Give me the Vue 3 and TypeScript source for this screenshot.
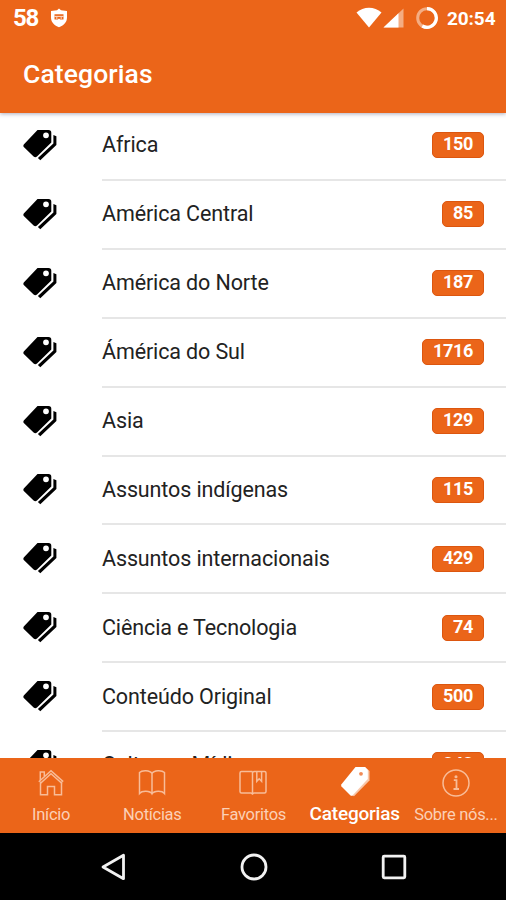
<script setup lang="ts">
interface Category {
  name: string
  count: number
}

interface Tab {
  id: string
  label: string
  active?: boolean
}

const categories: Category[] = [
  { name: 'Africa', count: 150 },
  { name: 'América Central', count: 85 },
  { name: 'América do Norte', count: 187 },
  { name: 'Ámérica do Sul', count: 1716 },
  { name: 'Asia', count: 129 },
  { name: 'Assuntos indígenas', count: 115 },
  { name: 'Assuntos internacionais', count: 429 },
  { name: 'Ciência e Tecnologia', count: 74 },
  { name: 'Conteúdo Original', count: 500 },
  { name: 'Cultura e Mídia', count: 343 },
]

const tabs: Tab[] = [
  { id: 'home', label: 'Início' },
  { id: 'news', label: 'Notícias' },
  { id: 'favorites', label: 'Favoritos' },
  { id: 'categories', label: 'Categorias', active: true },
  { id: 'about', label: 'Sobre nós...' },
]
</script>

<template>
  <div class="screen">
    <header class="header">
      <div class="status">
        <span class="battery">58</span>
        <svg class="shield" viewBox="0 0 18 20" width="18" height="20">
          <path d="M9 0.5 L11 2.2 L17 3 V9.5 C17 14.5 13.5 17.5 9 19.3 C4.5 17.5 1 14.5 1 9.5 V3 L7 2.2 Z" fill="#fff" />
          <path d="M4.5 6.2 H13.5 V11.5 H10.2 L9 10.5 L7.8 11.5 H4.5 Z" fill="#eb6519" />
          <path d="M4.5 8.4 H13.5" stroke="#fff" stroke-width="0.8" />
          <path d="M6 10 H7.5 M10.5 10 H12" stroke="#fff" stroke-width="1" />
        </svg>
        <span class="spacer"></span>
        <svg class="wifi" viewBox="0 0 26 21" width="26" height="21">
          <path d="M0.5 5.6 C7.5 -0.9 18.5 -0.9 25.5 5.6 L13 20.5 Z" fill="#fff" />
        </svg>
        <svg class="signal" viewBox="0 0 21 20" width="21" height="20">
          <path d="M0.5 19.5 L20.5 0.5 V19.5 Z" fill="#f4ad83" />
          <path d="M0.5 19.5 L15.5 5.2 V19.5 Z" fill="#fff" />
        </svg>
        <svg class="ring" viewBox="0 0 24 24" width="24" height="24">
          <circle cx="12" cy="12" r="9.3" fill="none" stroke="#f4ad83" stroke-width="3" />
          <path d="M12 2.7 A9.3 9.3 0 1 1 7.3 20" fill="none" stroke="#fff" stroke-width="3.2" />
        </svg>
        <span class="clock">20:54</span>
      </div>
      <h1 class="title">Categorias</h1>
    </header>

    <main class="list">
      <div v-for="category in categories" :key="category.name" class="row">
        <svg class="tags" viewBox="0 0 34 32" width="34" height="32">
          <path
            fill-rule="evenodd"
            d="M14.5 1 H25.5 Q28.3 1 28.3 3.8 V13.5 L14 27.6 Q12.3 29 10.6 27.6 L0.8 18 Q-0.2 16.6 1 15.2 Z M23 3.4 A2.9 2.9 0 1 0 23 9.2 A2.9 2.9 0 1 0 23 3.4 Z"
            fill="#000"
          />
          <path d="M30.4 6 L33.4 7.2 V16 L17.3 31.2 L14.9 29.1 L30.4 14.4 Z" fill="#000" />
        </svg>
        <div class="body">
          <span class="name">{{ category.name }}</span>
          <span class="badge">{{ category.count }}</span>
        </div>
      </div>
    </main>

    <nav class="tabs">
      <div v-for="tab in tabs" :key="tab.id" class="tab" :class="{ active: tab.active }">
        <svg class="icon" viewBox="0 0 30 30" width="30" height="30">
          <g v-if="tab.id === 'home'" class="line">
            <path d="M4.5 13.5 V26.8 H11.5 V18.5 H18.5 V26.8 H25.5 V13.5" />
            <path d="M2.8 13.8 L15 2.8 L27.2 13.6 M4.3 15.5 L15 5.8 L26 15.5" />
            <path d="M4.3 12 V4 H8.3 V8.3" />
          </g>
          <g v-else-if="tab.id === 'news'" class="line">
            <path d="M15 5.5 C13 2 5 2 2.5 4.5 V25.5 C5 22.5 13 22.5 15 26 C17 22.5 25 22.5 27.5 25.5 V4.5 C25 2 17 2 15 5.5 V26" />
          </g>
          <g v-else-if="tab.id === 'favorites'" class="line">
            <path d="M14.5 3.5 H3.5 Q2 3.5 2 5 V23.5 Q2 25 3.5 25 H13 L14.5 26 L16 25 H26.5 Q28 25 28 23.5 V5 Q28 3.5 26.5 3.5 H16 L14.5 4.3 V26" />
            <path d="M18.8 3.5 V13.3 L21.2 10.8 L23.6 13.3 V3.5" />
          </g>
          <g v-else-if="tab.id === 'categories'">
            <path fill="#f9c7a9" d="M25 -1 L29.5 3 V12.5 L14 28.2 L11 27 Z" />
            <path
              fill="#fff"
              d="M15.5 -1 H25 L27.8 2 V11 L12.5 27.5 Q11.5 28.4 10 27 L1.5 18.5 Q0.7 17.3 1.5 16.2 Z"
            />
            <circle cx="21" cy="5.8" r="1.9" fill="#f08a55" />
          </g>
          <g v-else class="line">
            <circle cx="15" cy="15" r="13" />
            <path d="M12.8 12.2 H15.5 V21 M12.5 21 H18" stroke-width="1.8" />
            <circle cx="15" cy="8.8" r="0.8" />
          </g>
        </svg>
        <span class="label">{{ tab.label }}</span>
      </div>
    </nav>

    <footer class="system">
      <svg viewBox="0 0 28 28" width="28" height="28">
        <path d="M23.5 2.3 V25.7 L3 14 Z" />
      </svg>
      <svg viewBox="0 0 28 28" width="28" height="28">
        <circle cx="14" cy="14" r="12" />
      </svg>
      <svg viewBox="0 0 28 28" width="28" height="28">
        <rect x="3.2" y="3.2" width="21.6" height="21.6" rx="1" />
      </svg>
    </footer>
  </div>
</template>

<style>
body {
  margin: 0;
}
</style>

<style scoped>
.screen {
  display: flex;
  flex-direction: column;
  width: 506px;
  height: 900px;
  overflow: hidden;
  background: #fff;
  font-family: Roboto, "Liberation Sans", sans-serif;
}

.header {
  flex: none;
  height: 113px;
  background: #eb6519;
  color: #fff;
  box-shadow: 0 1px 4px rgba(50, 50, 90, 0.4);
  z-index: 1;
}

.status {
  display: flex;
  align-items: center;
  height: 36px;
  padding: 0 10px 0 13px;
}

.battery {
  width: 25px;
  font-size: 24px;
  font-weight: 700;
  letter-spacing: -1.3px;
}

.shield {
  margin: 0 0 1px 12px;
}

.spacer {
  flex: 1;
}

.wifi {
  margin-bottom: 2px;
}

.signal {
  margin: 0 0 1px 1px;
}

.ring {
  margin: 0 0 1px 11px;
}

.clock {
  width: 49px;
  margin-left: 8px;
  font-size: 19px;
  font-weight: 700;
  letter-spacing: -0.1px;
  white-space: nowrap;
}

.title {
  margin: 0;
  padding: 22px 23px 0;
  font-size: 26.5px;
  line-height: 32px;
  font-weight: 500;
  letter-spacing: 0.1px;
}

.list {
  flex: none;
  height: 645px;
  overflow: hidden;
}

.row {
  display: flex;
  height: 68.9px;
  padding-left: 23px;
}

.tags {
  flex: none;
  margin: 16px 45px 0 0;
}

.body {
  display: flex;
  flex: 1;
  justify-content: space-between;
  align-items: flex-start;
  box-sizing: border-box;
  height: 68px;
  padding-right: 22px;
  border-bottom: 2px solid #e6e6e6;
}

.name {
  margin-top: 17.4px;
  font-size: 21.5px;
  line-height: 30px;
  letter-spacing: -0.12px;
  color: #222;
  white-space: nowrap;
}

.badge {
  box-sizing: border-box;
  height: 26px;
  margin-top: 19.4px;
  padding: 0 10px;
  border: 1px solid #dc560f;
  border-radius: 5px;
  background: #eb6519;
  color: #fff;
  font-size: 18px;
  line-height: 22px;
  font-weight: 700;
  letter-spacing: -0.3px;
}

.tabs {
  display: grid;
  grid-template-columns: repeat(5, 1fr);
  flex: none;
  height: 75px;
  background: #eb6519;
  z-index: 1;
}

.tab {
  display: flex;
  flex-direction: column;
  align-items: center;
  padding: 10px 0 0 1px;
  color: #fbd0b6;
}

.icon {
  overflow: visible;
}

.line {
  fill: none;
  stroke: #f8bc98;
  stroke-width: 1.5;
}

.label {
  margin-top: 6px;
  font-size: 16.5px;
  line-height: 22px;
  letter-spacing: -0.3px;
  white-space: nowrap;
}

.active {
  color: #fff;
}

.active .label {
  margin-top: 5px;
  font-size: 19px;
  font-weight: 500;
  letter-spacing: -0.2px;
}

.system {
  display: flex;
  justify-content: center;
  gap: 112px;
  flex: 1;
  padding: 20px 0 0 2px;
  background: #000;
}

.system svg {
  fill: none;
  stroke: #f2f2f2;
  stroke-width: 2.8;
  stroke-linejoin: round;
}
</style>
